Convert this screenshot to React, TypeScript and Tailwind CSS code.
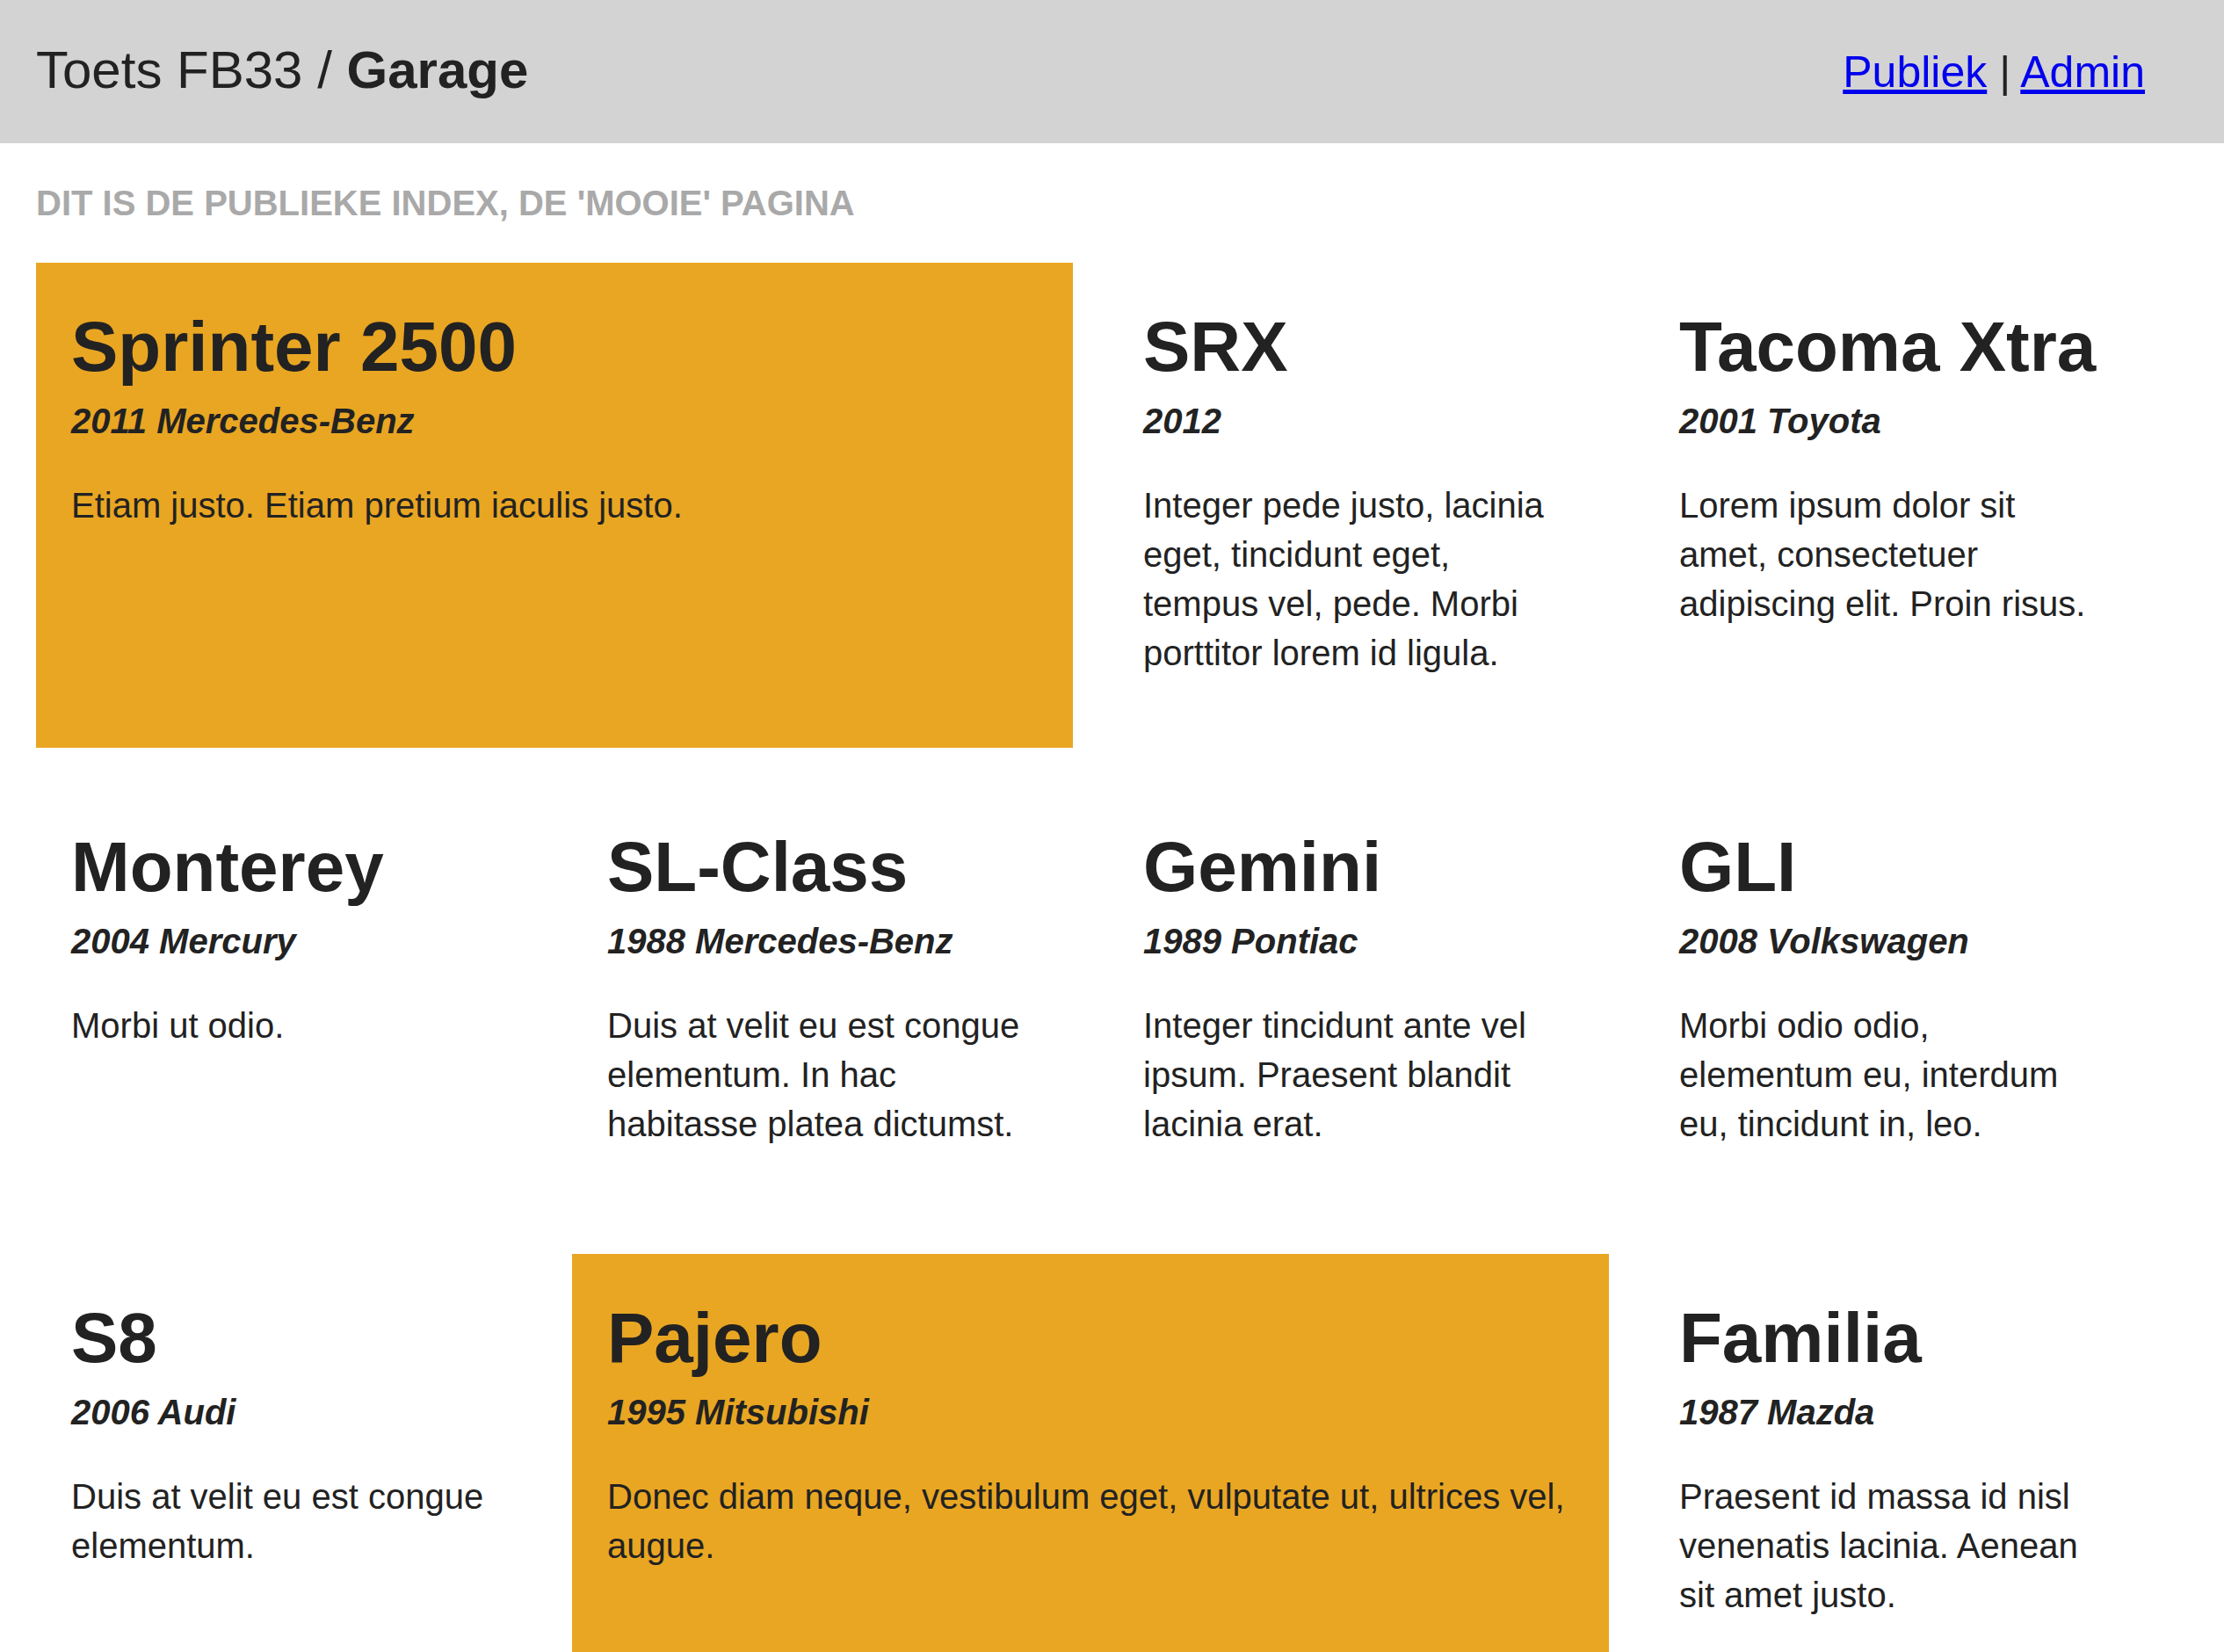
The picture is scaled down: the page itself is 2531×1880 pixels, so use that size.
import React from "react";

type Car = { name: string; sub: string; text: string; wide?: boolean };

const cars: Car[] = [
  { name: "Sprinter 2500", sub: "2011 Mercedes-Benz", text: "Etiam justo. Etiam pretium iaculis justo.", wide: true },
  { name: "SRX", sub: "2012", text: "Integer pede justo, lacinia eget, tincidunt eget, tempus vel, pede. Morbi porttitor lorem id ligula." },
  { name: "Tacoma Xtra", sub: "2001 Toyota", text: "Lorem ipsum dolor sit amet, consectetuer adipiscing elit. Proin risus." },
  { name: "Monterey", sub: "2004 Mercury", text: "Morbi ut odio." },
  { name: "SL-Class", sub: "1988 Mercedes-Benz", text: "Duis at velit eu est congue elementum. In hac habitasse platea dictumst." },
  { name: "Gemini", sub: "1989 Pontiac", text: "Integer tincidunt ante vel ipsum. Praesent blandit lacinia erat." },
  { name: "GLI", sub: "2008 Volkswagen", text: "Morbi odio odio, elementum eu, interdum eu, tincidunt in, leo." },
  { name: "S8", sub: "2006 Audi", text: "Duis at velit eu est congue elementum." },
  { name: "Pajero", sub: "1995 Mitsubishi", text: "Donec diam neque, vestibulum eget, vulputate ut, ultrices vel, augue.", wide: true },
  { name: "Familia", sub: "1987 Mazda", text: "Praesent id massa id nisl venenatis lacinia. Aenean sit amet justo." },
];

function Card({ car }: { car: Car }) {
  return (
    <div className={car.wide ? "col-span-2 bg-[#e9a623] p-[40px]" : "p-[40px]"}>
      <h2 className="m-0 text-[80px] leading-[112px] font-bold">{car.name}</h2>
      <div className="text-[40px] leading-[56px] font-bold italic">{car.sub}</div>
      <p className="my-[40px] text-[40px] leading-[56px]">{car.text}</p>
    </div>
  );
}

export default function App() {
  return (
    <div className="min-h-screen bg-white text-[#222222]" style={{ fontFamily: '"Liberation Sans", Arial, sans-serif' }}>
      <header className="bg-[#d3d3d3] h-[163px]">
        <div className="w-[2400px] ml-[41px] h-full flex items-center justify-between">
          <h1 className="text-[60px] leading-[84px] -mt-[3px]">
            Toets FB33 / <span className="font-bold">Garage</span>
          </h1>
          <nav className="text-[50px] leading-[70px]">
            <a href="#" className="text-[#0000ee] underline">Publiek</a>
            {" | "}
            <a href="#" className="text-[#0000ee] underline">Admin</a>
          </nav>
        </div>
      </header>
      <main className="w-[2400px] ml-[41px]">
        <div className="mt-[40px] mb-[40px] text-[40px] leading-[56px] font-bold uppercase text-[#a9a9a9]">
          Dit is de publieke index, de 'mooie' pagina
        </div>
        <div className="grid grid-cols-4 gap-[40px]">
          {cars.map((c) => (
            <Card key={c.name} car={c} />
          ))}
        </div>
      </main>
    </div>
  );
}
